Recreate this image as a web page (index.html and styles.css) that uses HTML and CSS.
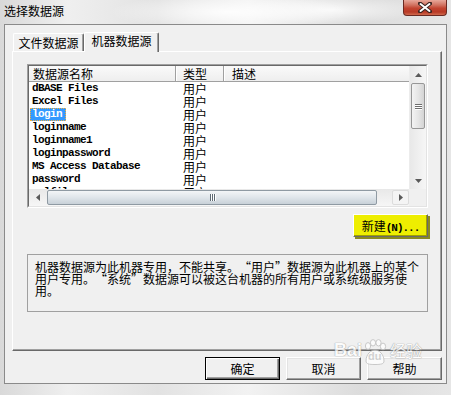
FILE: index.html
```html
<!DOCTYPE html>
<html>
<head>
<meta charset="utf-8">
<link rel="stylesheet" href="styles.css">
</head>
<body>
<div class="window">
  <div class="titlebar">
    <span class="title">选择数据源</span>
    <div class="close">
      <svg width="14" height="11" viewBox="0 0 14 11"><path d="M2 1.5 L12 9.5 M12 1.5 L2 9.5" stroke="#3a2420" stroke-width="4" stroke-linecap="round"/><path d="M2.5 2 L11.5 9 M11.5 2 L2.5 9" stroke="#ffffff" stroke-width="2" stroke-linecap="round"/></svg>
    </div>
  </div>
  <div class="frame">
    <div class="tabs">
      <div class="tab">文件数据源</div>
      <div class="tab active">机器数据源</div>
    </div>
    <div class="panel">
      <div class="listview">
        <div class="lv-inner">
          <div class="lv-main">
            <div class="lv-header">
              <div class="hcol hname">数据源名称</div>
              <div class="hcol htype">类型</div>
              <div class="hcol hdesc">描述</div>
            </div>
            <div class="row"><div class="cname"><span class="nm">dBASE Files</span></div><div class="ctype">用户</div></div>
            <div class="row"><div class="cname"><span class="nm">Excel Files</span></div><div class="ctype">用户</div></div>
            <div class="row"><div class="cname"><span class="nm sel">login</span></div><div class="ctype">用户</div></div>
            <div class="row"><div class="cname"><span class="nm">loginname</span></div><div class="ctype">用户</div></div>
            <div class="row"><div class="cname"><span class="nm">loginname1</span></div><div class="ctype">用户</div></div>
            <div class="row"><div class="cname"><span class="nm">loginpassword</span></div><div class="ctype">用户</div></div>
            <div class="row"><div class="cname"><span class="nm">MS Access Database</span></div><div class="ctype">用户</div></div>
            <div class="row"><div class="cname"><span class="nm">password</span></div><div class="ctype">用户</div></div>
            <div class="row"><div class="cname"><span class="nm">sqlfile</span></div><div class="ctype">用户</div></div>
          </div>
          <div class="vscroll">
            <div class="sb-btn"><svg width="7" height="4" viewBox="0 0 7 4"><path d="M0 4 L3.5 0 L7 4 Z" fill="#5a5a5a"/></svg></div>
            <div class="vthumb"><span></span><span></span><span></span></div>
            <div class="sb-fill"></div>
            <div class="sb-btn"><svg width="7" height="4" viewBox="0 0 7 4"><path d="M0 0 L7 0 L3.5 4 Z" fill="#5a5a5a"/></svg></div>
          </div>
          <div class="hscroll">
            <div class="sb-btn h"><svg width="4" height="7" viewBox="0 0 4 7"><path d="M4 0 L4 7 L0 3.5 Z" fill="#5a5a5a"/></svg></div>
            <div class="hthumb"><span></span><span></span><span></span></div>
            <div class="sb-fill"></div>
            <div class="sb-btn h hot"><svg width="4" height="7" viewBox="0 0 4 7"><path d="M0 0 L4 3.5 L0 7 Z" fill="#5a5a5a"/></svg></div>
          </div>
          <div class="corner"></div>
        </div>
      </div>
      <div class="new-row"><button class="btn new">新建<span class="mono">(N)...</span></button></div>
      <div class="desc">
        <span class="dl">机器数据源为此机器专用，不能共享。<span class="ql">“</span>用户<span class="qr">”</span>数据源为此机器上的某个</span>
        <span class="dl">用户专用。<span class="ql">“</span>系统<span class="qr">”</span>数据源可以被这台机器的所有用户或系统级服务使</span>
        <span class="dl">用。</span>
      </div>
    </div>
    <div class="buttons">
      <button class="btn default">确定</button>
      <button class="btn">取消</button>
      <button class="btn">帮助</button>
    </div>
  </div>
  <div class="watermark">
    <span class="wm-bai">Bai</span>
    <span class="wm-paw">
      <svg width="26" height="26" viewBox="0 0 26 26"><ellipse cx="6" cy="7" rx="2.6" ry="3.4" fill="#fff" stroke="#bbb"/><ellipse cx="11" cy="3.8" rx="2.6" ry="3.2" fill="#fff" stroke="#bbb"/><ellipse cx="16.5" cy="3.8" rx="2.6" ry="3.2" fill="#fff" stroke="#bbb"/><ellipse cx="21" cy="7.5" rx="2.6" ry="3.4" fill="#fff" stroke="#bbb"/><path d="M4 22 C4 15 9 11 13 11 C17 11 22 15 22 22 C22 25 19 25.5 13 25.5 C7 25.5 4 25 4 22 Z" fill="#fff" stroke="#bbb"/></svg>
      <span class="wm-du">du</span>
    </span>
    <span class="wm-jy">经验</span>
  </div>
</div>
</body>
</html>
```

FILE: styles.css
```css
body {
  margin: 0;
}

.window {
  position: relative;
  width: 451px;
  height: 395px;
  overflow: hidden;
  font-family: "Noto Sans CJK SC", sans-serif;
  font-size: 12px;
  color: #000;
  background:
    radial-gradient(ellipse 120px 18px at 230px 12px, rgba(255,255,255,0.9), rgba(255,255,255,0)),
    radial-gradient(ellipse 90px 14px at 330px 10px, rgba(255,255,255,0.8), rgba(255,255,255,0)),
    linear-gradient(to right, #d9d9d9, #efefef 15%, #e2e2e2 35%, #f2f2f2 55%, #dcdcdc 80%, #e6e6e6);
}

.titlebar {
  height: 24px;
  display: flex;
  align-items: flex-start;
}

.title {
  padding: 4px 0 0 4px;
  line-height: 14px;
  font-size: 12px;
}

.close {
  margin-left: auto;
  margin-right: 4px;
  width: 44px;
  height: 16px;
  box-sizing: border-box;
  border: 1px solid #6b2a22;
  border-top: none;
  border-radius: 0 0 4px 4px;
  background: linear-gradient(#e8a89a, #d0705e 35%, #c24430 55%, #b83a26 80%, #d06a4e);
  display: flex;
  align-items: center;
  justify-content: center;
}

.frame {
  margin-left: 4px;
  width: 443px;
  height: 360px;
  box-sizing: border-box;
  border: 1px solid #8a8a8a;
  background: #f0f0f0;
  padding: 7px 4px 0 7px;
}

.tabs {
  display: flex;
  align-items: flex-end;
  height: 19px;
  padding-left: 1px;
}

.tab {
  width: 71px;
  height: 18px;
  box-sizing: border-box;
  border: 1px solid;
  border-color: #fff #696969 transparent #fff;
  border-bottom: none;
  border-radius: 2px 2px 0 0;
  box-shadow: inset -1px 0 #a0a0a0;
  background: #f0f0f0;
  line-height: 14px;
  padding-top: 2px;
  text-align: center;
}

.tab.active {
  width: 75px;
  height: 20px;
  margin-bottom: -1px;
  position: relative;
  z-index: 1;
  padding-top: 1px;
}

.panel {
  width: 430px;
  height: 300px;
  box-sizing: border-box;
  border: 1px solid;
  border-color: #fff #696969 #696969 #fff;
  box-shadow: inset -1px -1px #a0a0a0;
  padding: 12px 0 0 14px;
}

.listview {
  width: 401px;
  height: 144px;
  box-sizing: border-box;
  border: 1px solid;
  border-color: #a0a0a0 #fff #fff #a0a0a0;
}

.lv-inner {
  height: 100%;
  box-sizing: border-box;
  border: 1px solid;
  border-color: #696969 #e3e3e3 #e3e3e3 #696969;
  background: #fff;
  display: grid;
  grid-template-columns: 380px 17px;
  grid-template-rows: 123px 17px;
}

.lv-main {
  overflow: hidden;
}

.lv-header {
  display: flex;
  height: 16px;
  box-sizing: border-box;
  border-bottom: 1px solid #a0a0a0;
  background: linear-gradient(#fafafa, #eeeeee);
  line-height: 15px;
}

.hcol {
  box-sizing: border-box;
  border-right: 1px solid #a0a0a0;
}

.hname {
  width: 147px;
  padding-left: 4px;
}

.htype {
  width: 48px;
  padding-left: 6px;
  border-left: 1px solid #fff;
}

.hdesc {
  flex: 1;
  padding-left: 7px;
  border-left: 1px solid #fff;
  border-right: none;
}

.row {
  display: flex;
  height: 13px;
  line-height: 13px;
}

.cname {
  width: 147px;
  height: 13px;
  padding-left: 1px;
  box-sizing: border-box;
  display: flex;
  align-items: flex-start;
}

.nm {
  display: block;
  height: 13px;
  line-height: 13px;
  padding: 0 4px 0 2px;
  font-family: "Liberation Mono", monospace;
  font-size: 11px;
  font-weight: bold;
  letter-spacing: -0.6px;
  white-space: pre;
}

.nm.sel {
  background: #3399ff;
  color: #fff;
  outline: 1px dotted #f4b040;
  outline-offset: -1px;
}

.ctype {
  width: 48px;
  height: 13px;
  padding-left: 7px;
  box-sizing: border-box;
  line-height: 13px;
}

.vscroll {
  display: flex;
  flex-direction: column;
  background: linear-gradient(to right, #e8e8e8, #f6f6f6);
  border-left: 1px solid #ececec;
  box-sizing: border-box;
}

.sb-btn {
  flex: none;
  height: 17px;
  display: flex;
  align-items: center;
  justify-content: center;
}

.sb-fill {
  flex: 1;
}

.vthumb {
  margin: 0 1px;
  height: 46px;
  box-sizing: border-box;
  border: 1px solid #979797;
  border-radius: 2px;
  background: linear-gradient(to right, #f3f3f3, #e6e6e6 50%, #d4d4d4);
  display: flex;
  flex-direction: column;
  align-items: center;
  justify-content: center;
  gap: 1px;
}

.vthumb span {
  width: 7px;
  height: 1px;
  background: #6e6e6e;
  box-shadow: 0 1px #fff;
}

.hscroll {
  display: flex;
  align-items: center;
  background: linear-gradient(#e8e8e8, #f6f6f6);
}

.sb-btn.h {
  width: 17px;
  height: 17px;
}

.sb-btn.hot {
  height: 15px;
  box-sizing: border-box;
  border: 1px solid #dcdcdc;
  border-radius: 2px;
  background: #f4f4f4;
}

.hthumb {
  margin-left: 1px;
  width: 330px;
  height: 15px;
  box-sizing: border-box;
  border: 1px solid #8f9aa3;
  border-radius: 2px;
  background: linear-gradient(#f3f5f7, #dfe5ea 50%, #c8d1d8);
  display: flex;
  align-items: center;
  justify-content: center;
  gap: 1px;
}

.hthumb span {
  width: 1px;
  height: 7px;
  background: #5e6a74;
  box-shadow: 1px 0 #fff;
}

.corner {
  background: #f0f0f0;
}

.new-row {
  width: 401px;
  display: flex;
  justify-content: flex-end;
  margin-top: 6px;
}

.btn {
  width: 75px;
  height: 23px;
  box-sizing: border-box;
  margin: 0;
  padding: 0;
  font-family: "Noto Sans CJK SC", sans-serif;
  font-size: 12px;
  color: #000;
  background: #f0f0f0;
  border: 1px solid;
  border-color: #fff #696969 #696969 #fff;
  box-shadow: inset -1px -1px #a0a0a0, inset 1px 1px #e3e3e3;
  border-radius: 0;
}

.btn.default {
  border: 1px solid #000;
  box-shadow: inset 1px 1px #fff, inset -1px -1px #696969, inset -2px -2px #a0a0a0;
}

.btn.new {
  background: #eeee00;
  box-shadow: inset -1px -1px #a0a000, 2px 2px 0 #8a8a20;
}

.mono {
  font-family: "Liberation Mono", monospace;
  font-weight: bold;
  font-size: 11px;
  letter-spacing: -1px;
}

.desc {
  width: 401px;
  height: 58px;
  margin-top: 17px;
  box-sizing: border-box;
  border: 1px solid #a0a0a0;
  padding: 6px 5px 0 7px;
  line-height: 12px;
  font-size: 12px;
}

.dl {
  display: block;
  height: 12px;
  white-space: nowrap;
}

.ql,
.qr {
  display: inline-block;
  width: 12px;
}

.ql {
  text-align: right;
}

.qr {
  text-align: left;
}

.buttons {
  display: flex;
  justify-content: flex-end;
  gap: 6px;
  margin-top: 6px;
}

.watermark {
  position: absolute;
  left: 334px;
  top: 339px;
  display: flex;
  align-items: flex-end;
  opacity: 0.75;
  color: #fff;
  text-shadow: 0 0 1px #888, 0 0 1px #888;
  pointer-events: none;
}

.wm-bai {
  font-family: "Liberation Sans", sans-serif;
  font-weight: bold;
  font-size: 18px;
  line-height: 18px;
  margin-bottom: 9px;
}

.wm-paw {
  position: relative;
  width: 26px;
  height: 26px;
  margin-bottom: 3px;
}

.wm-paw svg {
  display: block;
}

.wm-du {
  position: absolute;
  left: 6px;
  top: 11px;
  font-family: "Liberation Sans", sans-serif;
  font-weight: bold;
  font-size: 11px;
  line-height: 12px;
  color: #c8c8c8;
  text-shadow: none;
}

.wm-jy {
  font-size: 16px;
  line-height: 18px;
  margin-bottom: 9px;
  margin-left: 2px;
}
```
